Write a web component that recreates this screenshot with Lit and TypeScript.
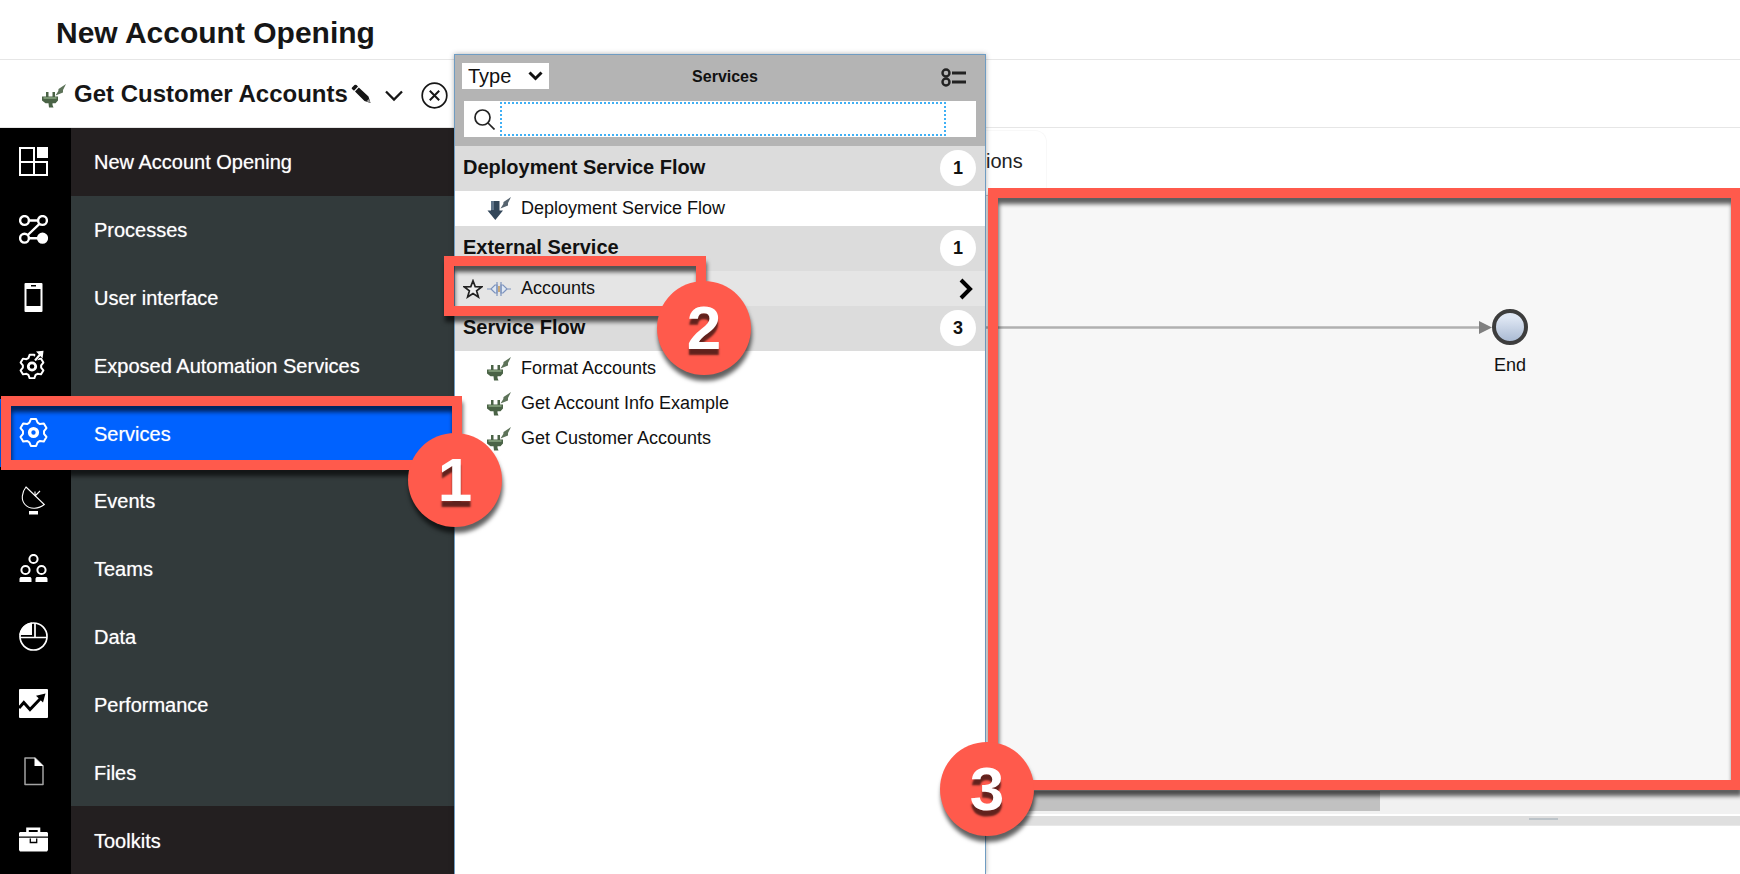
import { LitElement, html, css, svg, nothing } from "lit";
import { customElement, property, state } from "lit/decorators.js";
import { classMap } from "lit/directives/class-map.js";

const gearPath = (cx: number, cy: number, outer: number, inner: number) => {
  const pts: string[] = [];
  const at = (deg: number, r: number) => {
    const a = (deg * Math.PI) / 180;
    pts.push(`${(cx + r * Math.cos(a)).toFixed(2)} ${(cy + r * Math.sin(a)).toFixed(2)}`);
  };
  for (let i = 0; i < 6; i++) {
    const t = -90 + i * 60;
    at(t - 23, inner);
    at(t - 11, outer);
    at(t + 11, outer);
    at(t + 23, inner);
  }
  return `M${pts.join("L")}Z`;
};

const navIcons: Record<string, unknown> = {
  dashboard: svg`<path d="M1 1H15V28M1 0V28H28V15H1" fill="none" stroke="#fff" stroke-width="2"/><rect x="18" width="11" height="11" fill="#fff"/>`,
  processes: svg`<g fill="none" stroke="#fff" stroke-width="2.4"><circle cx="5.5" cy="5.5" r="4.4"/><circle cx="23.5" cy="5.5" r="4.4"/><circle cx="5.5" cy="23.2" r="4.4"/><circle cx="23.5" cy="23.2" r="4.4" fill="#fff"/><path d="M10 5.5h9M20.5 8.8L8.8 20M10 23.2h9"/></g>`,
  phone: svg`<path fill="#fff" fill-rule="evenodd" d="M6.5 0h16q1 0 1 1v27q0 1-1 1h-16q-1 0-1-1V1q0-1 1-1zM7.5 6v17h14V6zM12 2v1.4h5V2z"/>`,
  exposed: svg`<path d="${gearPath(13, 16.5, 12, 9.2)}" fill="none" stroke="#fff" stroke-width="2" stroke-linejoin="round"/><circle cx="13" cy="16.5" r="3.7" fill="none" stroke="#fff" stroke-width="2.8"/><path d="M15.5 10L21 3.5" stroke="#000" stroke-width="4.5"/><path d="M16 10.5L21.5 4" stroke="#fff" stroke-width="2.2"/><path d="M17 1.5L24.5 0.8L23.6 8.5Z" fill="#fff"/>`,
  services: svg`<path d="${gearPath(14.5, 14.5, 13.7, 10.6)}" fill="none" stroke="#fff" stroke-width="2" stroke-linejoin="round"/><circle cx="14.5" cy="14.5" r="3.9" fill="none" stroke="#fff" stroke-width="3.4"/>`,
  events: svg`<g fill="none" stroke="#fff" stroke-width="1.1"><path d="M7 1L25.3 18.5C20 23 11 24 6 18.5C2 14 2.500 6.500 7 1z"/><path d="M16 10L21 5M16 5.500V10"/></g><path d="M10 25h9v3.500h-9z" fill="#fff"/>`,
  teams: svg`<g fill="none" stroke="#fff" stroke-width="2"><circle cx="14.500" cy="5" r="4.100"/><circle cx="6.500" cy="16" r="4.100"/><circle cx="22.500" cy="16" r="4.100"/></g><path fill="#fff" d="M1.500 23h10l1 1.500V28H0.500v-3.500zM17.500 23h10l1 1.500V28H16.500v-3.500z"/>`,
  data: svg`<circle cx="14.500" cy="14.500" r="13.500" fill="none" stroke="#fff" stroke-width="1.700"/><path d="M0.500 13A14 14 0 0 1 13 0.500V13z" fill="#fff"/><path d="M16 1V15.500M1 15.500H28" stroke="#fff" stroke-width="1.700"/>`,
  performance: svg`<rect width="29" height="29" rx="1" fill="#fff"/><path d="M0 19L4.800 13.500L11 20.500L22 9" fill="none" stroke="#000" stroke-width="3"/><path d="M17 6.800L26.500 4.500L24 13.500Z"/>`,
  files: svg`<path d="M6 1H16L24 9V27.500H6z" fill="none" stroke="#a3a3a3" stroke-width="1.500" stroke-linejoin="round"/><path d="M15.500 0.500L24.500 9H15.500z" fill="#fff"/>`,
  toolkits: svg`<path d="M8.500 8V3.800H20V8" fill="none" stroke="#fff" stroke-width="2.600"/><path d="M1 7h27l1 1v3.500H0V8zM0 12.800h29V25l-1 1.500H1L0 25z" fill="#fff"/><path d="M11.300 13.500V17.500H17.700V13.500" fill="none" stroke="#000" stroke-width="1.300"/>`,
};

const icon = (name: string) =>
  html`<svg class="nav-icon" viewBox="0 0 29 29" aria-hidden="true">${navIcons[name]}</svg>`;

const bolt = (color: string) =>
  svg`<path d="M24 0L16.500 5L16.300 7L13.500 11.500L21 8.500L21 6z" fill="${color}"/>`;

const glyphs: Record<string, unknown> = {
  flow: svg`<path d="M4 8h2.500v4.500h4V8H13v4.500h3V16.500l-2.500 2.700H10.500V21l1 2.500H7l-.500-4.300H3.500L0 16.500v-4h4z" fill="#4a6346"/><path d="M1.500 13h13v2h-13z" fill="#7a9673"/>${bolt("#5d7359")}`,
  deploy: svg`<path d="M4 4h8.500v9.500H16L8.300 23L0.500 13.500H4z" fill="#33475a"/><path d="M4 4h3v9H4z" fill="#60758a"/>${bolt("#56646f")}`,
  external: svg`<g fill="#dfe8f4" stroke="#7d93bd" stroke-width="1.200"><path d="M0 12h4l4-4h2v8H8l-4-4M24 12h-4l-4-4h-2v8h2l4-4"/><path d="M10 5v14M14 5v14"/></g><path d="M11 9h2v6h-2z" fill="#c9a878"/>`,
};
const glyph = (name: string) =>
  html`<svg class="glyph" viewBox="0 0 24 24" aria-hidden="true">${glyphs[name]}</svg>`;

@customElement("step-callout")
export class StepCallout extends LitElement {
  @property() number = "";
  static styles = css`
    :host {
      position: absolute;
      box-sizing: border-box;
      border: 10px solid #ff5a4c;
      filter: drop-shadow(1px 6px 2px rgba(0, 0, 0, 0.62));
      pointer-events: none;
      z-index: 3;
    }
    .disc {
      position: absolute;
      right: var(--disc-right, auto);
      left: var(--disc-left, auto);
      bottom: var(--disc-bottom);
      width: 94px;
      height: 94px;
      border-radius: 50%;
      background: #ff5a4c;
      color: #fff;
      font: bold 62px/94px "Liberation Sans", Arial, sans-serif;
      text-align: center;
      text-shadow: 0 6px 2px rgba(0, 0, 0, 0.62);
    }
  `;
  render() {
    return html`<span class="disc">${this.number}</span>`;
  }
}

interface Item {
  label: string;
  glyph: string;
  active?: boolean;
}

const groups: { title: string; items: Item[] }[] = [
  { title: "Deployment Service Flow", items: [{ label: "Deployment Service Flow", glyph: "deploy" }] },
  { title: "External Service", items: [{ label: "Accounts", glyph: "external", active: true }] },
  {
    title: "Service Flow",
    items: [
      { label: "Format Accounts", glyph: "flow" },
      { label: "Get Account Info Example", glyph: "flow" },
      { label: "Get Customer Accounts", glyph: "flow" },
    ],
  },
];

@customElement("services-panel")
export class ServicesPanel extends LitElement {
  static styles = css`
    :host {
      display: block;
      box-sizing: border-box;
      background: #fff;
      border: 1px solid #6f9cc2;
      border-bottom: 0;
      box-shadow: 0 0 5px rgba(0, 0, 0, 0.3);
      color: #111;
      font: 18px/35px "Liberation Sans", Arial, sans-serif;
    }
    button {
      font: inherit;
      color: inherit;
      background: none;
      border: 0;
      padding: 0;
    }
    .head {
      background: #b4b4b4;
      padding: 8px 9px 9px 7px;
    }
    .bar {
      display: grid;
      grid-template-columns: 1fr auto 1fr;
      align-items: center;
      height: 26px;
    }
    .type {
      display: grid;
      width: 87px;
      align-items: center;
    }
    .type select {
      grid-area: 1 / 1;
      appearance: none;
      border: 0;
      border-radius: 0;
      background: #fff;
      color: #111;
      height: 26px;
      padding: 0 0 0 6px;
      font: 20px/26px "Liberation Sans", Arial, sans-serif;
    }
    .type svg {
      grid-area: 1 / 1;
      justify-self: end;
      margin-right: 6px;
      width: 15px;
      height: 10px;
      pointer-events: none;
    }
    .bar h2 {
      margin: 2px 0 0 12px;
      font-size: 16px;
      line-height: 24px;
    }
    .view {
      justify-self: end;
      margin-right: 10px;
      padding-top: 2px;
      display: flex;
    }
    .view svg {
      width: 25px;
      height: 19px;
    }
    .search {
      display: flex;
      align-items: center;
      gap: 5px;
      height: 36px;
      margin: 12px 0 0 2px;
      padding: 0 30px 0 10px;
      background: #fff;
    }
    .search svg {
      width: 21px;
      height: 21px;
      flex: none;
    }
    .search label {
      display: flex;
    }
    .search input {
      flex: 1;
      min-width: 0;
      box-sizing: border-box;
      height: 34px;
      border: 2px dotted #3fb0f5;
      outline: 0;
      background: #fff;
      font: 18px/24px "Liberation Sans", Arial, sans-serif;
    }
    .group {
      display: flex;
      align-items: center;
      justify-content: space-between;
      height: 45px;
      margin: 0;
      padding: 0 9px 0 8px;
      background: #dcdcdc;
      font-size: 20px;
      line-height: 41px;
    }
    .group span:first-child {
      padding-bottom: 2px;
    }
    .count {
      width: 36px;
      height: 36px;
      margin-bottom: 2px;
      border-radius: 50%;
      background: #fff;
      font-size: 18px;
      line-height: 36px;
      text-align: center;
    }
    ul {
      list-style: none;
      margin: 0;
      padding: 0;
    }
    li {
      display: flex;
      align-items: center;
      height: 35px;
      padding: 0 12px 0 8px;
    }
    li.active {
      background: #e5e5e5;
    }
    .fav,
    .open {
      display: flex;
    }
    .fav {
      width: 24px;
    }
    .fav svg {
      width: 20px;
      height: 20px;
    }
    .open svg {
      width: 14px;
      height: 22px;
    }
    .entry {
      flex: 1;
      display: flex;
      align-items: center;
      gap: 10px;
      text-align: left;
    }
    .glyph {
      width: 24px;
      height: 24px;
    }
  `;
  render() {
    return html`
      <div class="head">
        <div class="bar">
          <div class="type">
            <select aria-label="Group by">
              <option>Type</option>
            </select>
            <svg viewBox="0 0 15 10" aria-hidden="true">
              <path d="M1.500 1.500L7.500 7.500L13.500 1.500" fill="none" stroke="#111" stroke-width="3" />
            </svg>
          </div>
          <h2>Services</h2>
          <button class="view" aria-label="Change view">
            <svg viewBox="0 0 25 19" fill="none" stroke="#222" aria-hidden="true">
              <circle cx="5" cy="5" r="3.500" stroke-width="2.400" />
              <circle cx="5" cy="14" r="3.500" stroke-width="2.400" />
              <path d="M11 5H25M11 14H25" stroke-width="3" />
            </svg>
          </button>
        </div>
        <div class="search">
          <label for="filter" aria-label="Search services">
            <svg viewBox="0 0 21 21" fill="none" stroke="#222" stroke-width="1.700" aria-hidden="true">
              <circle cx="8.500" cy="8.500" r="7.500" />
              <path d="M14 14L20.500 20.500" />
            </svg>
          </label>
          <input id="filter" type="text" />
        </div>
      </div>
      ${groups.map(
        (g) => html`
          <h3 class="group"><span>${g.title}</span><span class="count">${g.items.length}</span></h3>
          <ul>
            ${g.items.map(
              (it) => html`
                <li class=${classMap({ active: !!it.active })}>
                  <button class="fav" aria-label="Add to favorites">
                    ${it.active
                      ? html`<svg viewBox="0 0 20 20" aria-hidden="true">
                          <path
                            d="M10 1.800L12.200 7.600L18.600 7.900L13.600 11.800L15.400 18L10 14.500L4.600 18L6.400 11.800L1.400 7.900L7.800 7.600Z"
                            fill="#f0f0f0"
                            stroke="#222"
                            stroke-width="1.700"
                          />
                        </svg>`
                      : nothing}
                  </button>
                  <button class="entry">${glyph(it.glyph)}<span>${it.label}</span></button>
                  ${it.active
                    ? html`<button class="open" aria-label="Open">
                        <svg viewBox="0 0 14 22" aria-hidden="true">
                          <path d="M2 2L11 11L2 20" fill="none" stroke="#000" stroke-width="4" />
                        </svg>
                      </button>`
                    : nothing}
                </li>
              `
            )}
          </ul>
        `
      )}
    `;
  }
}

const nav = [
  { label: "New Account Opening", icon: "dashboard", dark: true },
  { label: "Processes", icon: "processes" },
  { label: "User interface", icon: "phone" },
  { label: "Exposed Automation Services", icon: "exposed" },
  { label: "Services", icon: "services" },
  { label: "Events", icon: "events" },
  { label: "Teams", icon: "teams" },
  { label: "Data", icon: "data" },
  { label: "Performance", icon: "performance" },
  { label: "Files", icon: "files" },
  { label: "Toolkits", icon: "toolkits", dark: true },
];

@customElement("app-root")
export class AppRoot extends LitElement {
  @state() private selected = "Services";

  static styles = css`
    :host {
      position: relative;
      display: flex;
      flex-direction: column;
      height: 100vh;
      overflow: hidden;
      background: #fff;
      color: #161616;
      font: 20px/24px "Liberation Sans", Arial, sans-serif;
    }
    button {
      font: inherit;
      color: inherit;
      background: none;
      border: 0;
      padding: 0;
    }
    .top {
      flex: none;
      padding: 6px 56px 0;
      border-bottom: 1px solid #e6e6e6;
    }
    .top h1 {
      margin: 0;
      font-size: 30px;
      line-height: 53px;
    }
    .title {
      flex: none;
      display: flex;
      align-items: center;
      height: 67px;
      padding-left: 42px;
      border-bottom: 1px solid #e6e6e6;
    }
    .title h2 {
      margin: 0 3px 0 8px;
      font-size: 24px;
      line-height: 28px;
    }
    .title button {
      display: flex;
    }
    .glyph {
      width: 24px;
      height: 24px;
    }
    .title .glyph {
      margin-top: 4px;
    }
    .pencil svg {
      width: 20px;
      height: 20px;
    }
    .more {
      margin: 4px 18px 0 14px;
    }
    .more svg {
      width: 18px;
      height: 12px;
    }
    .close {
      margin-top: 4px;
    }
    .close svg {
      width: 27px;
      height: 27px;
    }
    .body {
      flex: 1;
      display: flex;
      min-height: 0;
    }
    nav {
      flex: none;
      width: 455px;
      display: grid;
      grid-auto-rows: 1fr;
      background: #323a3b;
      color: #fff;
    }
    .row {
      display: grid;
      grid-template-columns: 71px 1fr;
      text-align: left;
    }
    .cell {
      display: flex;
      align-items: center;
      padding: 0 0 1px 19px;
      background: #000;
    }
    .nav-icon {
      width: 29px;
      height: 29px;
    }
    .label {
      display: flex;
      align-items: center;
      padding-left: 23px;
      padding-top: 1px;
      text-shadow: 0 0 1px rgba(255, 255, 255, 0.6);
    }
    .dark .label {
      background: #231f20;
    }
    .on .cell,
    .on .label {
      background: #0062ff;
    }
    main {
      flex: 1;
      min-width: 0;
      display: flex;
      flex-direction: column;
      padding-left: 531px;
    }
    .tabs {
      flex: none;
      display: flex;
      height: 67px;
      padding-top: 2px;
      box-sizing: border-box;
    }
    .tab {
      padding: 0 23px 4px 0;
      border: solid #f8f8f8;
      border-width: 1px 1px 0 0;
      border-radius: 0 12px 0 0;
      color: #222;
    }
    .canvas {
      position: relative;
      flex: 1;
      background: #f7f7f7;
      border-top: 1px solid #c8c8c8;
    }
    .flow {
      position: absolute;
      left: 0;
      top: 114px;
      width: 506px;
      height: 36px;
    }
    .node {
      position: absolute;
      left: 505px;
      top: 112px;
      width: 38px;
      text-align: center;
      color: #111;
      font-size: 18px;
    }
    .node svg {
      display: block;
      width: 38px;
      height: 38px;
      margin-bottom: 7px;
    }
    .scroll {
      flex: none;
      height: 23px;
      background: #f1f1f1;
    }
    .thumb {
      width: 394px;
      max-width: 100%;
      height: 20px;
      background: #c1c1c1;
    }
    .split {
      flex: none;
      display: flex;
      justify-content: center;
      height: 10px;
      margin-top: 2px;
      padding: 2px 0 0 361px;
      box-sizing: border-box;
      background: #dfdfdf;
      border-bottom: 1px solid #e8e8e8;
    }
    .grip {
      width: 29px;
      height: 2px;
      background: #bcc3c8;
    }
    .props {
      flex: none;
      height: 48px;
    }
    services-panel {
      position: absolute;
      left: 454px;
      top: 54px;
      bottom: 0;
      width: 532px;
      z-index: 2;
    }
    .one {
      left: 1px;
      top: 396px;
      width: 461px;
      height: 74px;
      --disc-right: -50px;
      --disc-bottom: -67px;
    }
    .two {
      left: 444px;
      top: 256px;
      width: 262px;
      height: 60px;
      --disc-right: -55px;
      --disc-bottom: -69px;
    }
    .three {
      left: 988px;
      right: -1px;
      top: 188px;
      bottom: 84px;
      --disc-left: -58px;
      --disc-bottom: -56px;
    }
  `;

  render() {
    return html`
      <header class="top"><h1>New Account Opening</h1></header>
      <div class="title">
        ${glyph("flow")}
        <h2>Get Customer Accounts</h2>
        <button class="pencil" aria-label="Rename">
          <svg viewBox="0 0 20 20" aria-hidden="true">
            <path d="M1 3.500L3.500 1Q4.500 .3 5.500 1L7 2.500L3 6.800L1 5Q.3 4.200 1 3.500zM4 7.600L7.800 3.500L17.500 12.500L19.500 19L13.500 17z" fill="#161616" />
            <path d="M15.500 17.300L18 15l1.500 4z" fill="#9a9a9a" />
          </svg>
        </button>
        <button class="more" aria-label="More">
          <svg viewBox="0 0 18 12" aria-hidden="true">
            <path d="M1 1.500L9 9.500L17 1.500" fill="none" stroke="#161616" stroke-width="2.300" />
          </svg>
        </button>
        <button class="close" aria-label="Close">
          <svg viewBox="0 0 27 27" fill="none" stroke="#161616" aria-hidden="true">
            <circle cx="13.500" cy="13.500" r="12.300" stroke-width="1.700" />
            <path d="M8.800 8.800L18.200 18.200M18.200 8.800L8.800 18.200" stroke-width="2" />
          </svg>
        </button>
      </div>
      <div class="body">
        <nav aria-label="Library">
          ${nav.map(
            (n) => html`
              <button
                class=${classMap({ row: true, dark: !!n.dark, on: n.label === this.selected })}
                @click=${() => (this.selected = n.label)}
              >
                <span class="cell">${icon(n.icon)}</span>
                <span class="label">${n.label}</span>
              </button>
            `
          )}
        </nav>
        <main>
          <div class="tabs"><button class="tab">ions</button></div>
          <div class="canvas">
            <svg class="flow" viewBox="0 0 506 36" aria-hidden="true">
              <path d="M0 17.500H494" stroke="#b0b0b0" stroke-width="2.500" />
              <path d="M493 11L506 17.500L493 24z" fill="#808080" />
            </svg>
            <div class="node">
              <svg viewBox="0 0 38 38" aria-hidden="true">
                <defs>
                  <linearGradient id="fill" x1="0" y1="0" x2="0" y2="1">
                    <stop offset="0.2" stop-color="#dfe7f4" />
                    <stop offset="1" stop-color="#a6b7d0" />
                  </linearGradient>
                </defs>
                <circle cx="19" cy="19" r="16" fill="url(#fill)" stroke="#3d3d3d" stroke-width="4" />
              </svg>
              <span>End</span>
            </div>
          </div>
          <div class="scroll"><div class="thumb"></div></div>
          <div class="split"><div class="grip"></div></div>
          <div class="props"></div>
        </main>
      </div>
      <services-panel></services-panel>
      <step-callout class="one" number="1"></step-callout>
      <step-callout class="two" number="2"></step-callout>
      <step-callout class="three" number="3"></step-callout>
    `;
  }
}
